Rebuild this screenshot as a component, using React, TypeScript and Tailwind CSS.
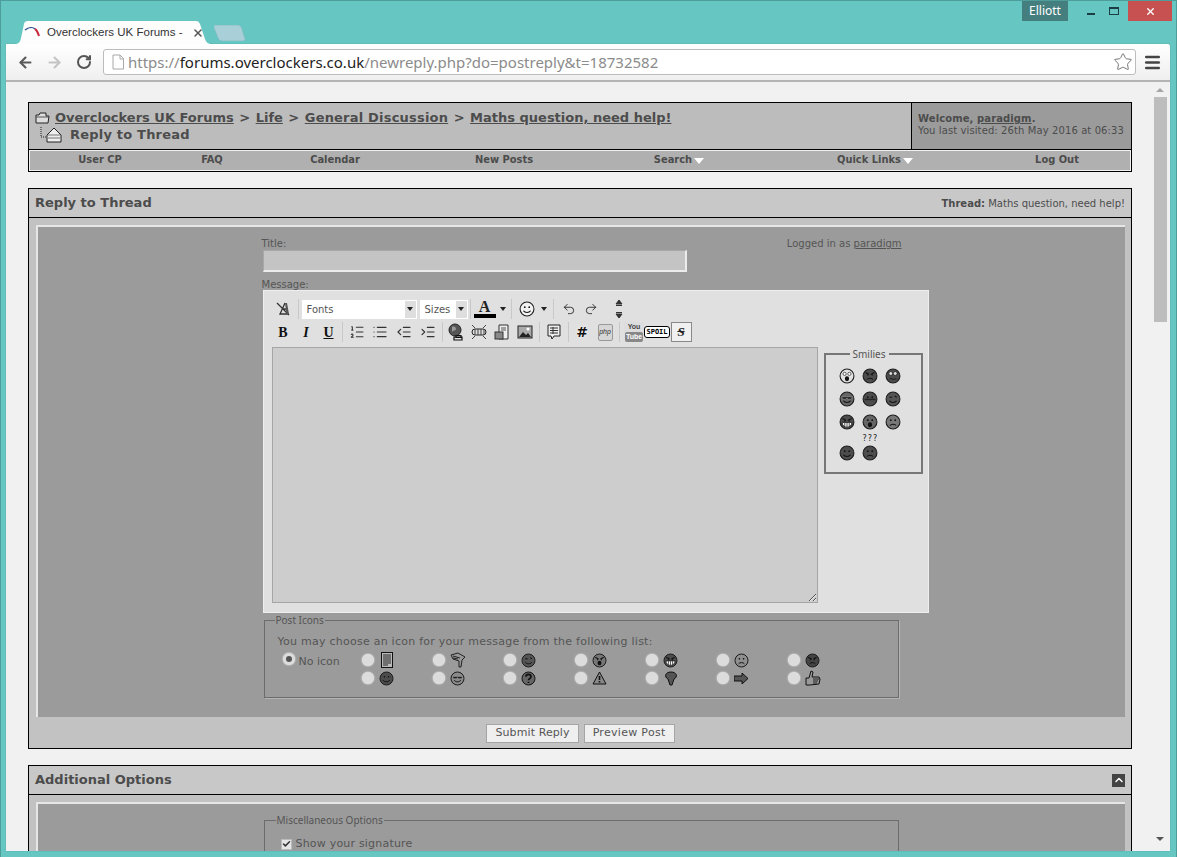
import React from "react"
import { ArrowLeft, ArrowRight, Check, ChevronUp, IndentDecrease, IndentIncrease, List, ListOrdered, Menu, RotateCw, Star, Undo2, Redo2, X } from "lucide-react"

type FaceProps = {
  size?: number
  fill?: string
  mouth?: "smile" | "flat" | "frown" | "open" | "grin" | "wavy" | "none"
  eyes?: "dots" | "angry" | "roll" | "shades" | "wide" | "wink"
}

function Face({ size = 18, fill = "#4c4c4c", mouth = "smile", eyes = "dots" }: FaceProps) {
  return (
    <svg width={size} height={size} viewBox="0 0 18 18" className="block shrink-0">
      <circle cx="9" cy="9" r="7.8" fill={fill} stroke="#1c1c1c" strokeWidth="1.2" />
      {eyes === "dots" && (
        <>
          <circle cx="6.5" cy="7" r="1" fill="#111" />
          <circle cx="11.5" cy="7" r="1" fill="#111" />
        </>
      )}
      {eyes === "angry" && <path d="M4 5l4 2.4M14 5l-4 2.4M6 8h1M11 8h1" stroke="#111" strokeWidth="1.3" fill="none" />}
      {eyes === "roll" && (
        <>
          <circle cx="6.5" cy="6.2" r="2.2" fill="#ddd" stroke="#111" strokeWidth=".8" />
          <circle cx="11.5" cy="6.2" r="2.2" fill="#ddd" stroke="#111" strokeWidth=".8" />
        </>
      )}
      {eyes === "shades" && <path d="M3 6.5h12l-1 2.7H10.4L9 7.8 7.6 9.2H4z" fill="#1b1b1b" stroke="#aaa" strokeWidth=".6" />}
      {eyes === "wide" && (
        <>
          <circle cx="6.3" cy="6.6" r="1.8" fill="#fff" stroke="#111" strokeWidth=".7" />
          <circle cx="11.7" cy="6.6" r="1.8" fill="#fff" stroke="#111" strokeWidth=".7" />
        </>
      )}
      {eyes === "wink" && <path d="M5 7h3M11 5.6l2.2 1.4" stroke="#111" strokeWidth="1.2" fill="none" />}
      {mouth === "smile" && <path d="M5 11c1.6 2.6 6.4 2.6 8 0" stroke="#111" strokeWidth="1.2" fill="none" />}
      {mouth === "flat" && <path d="M3 9.5h12" stroke="#222" strokeWidth="1.6" />}
      {mouth === "frown" && <path d="M5.5 13c1.4-2 5.6-2 7 0" stroke="#111" strokeWidth="1.2" fill="none" />}
      {mouth === "open" && <ellipse cx="9" cy="12" rx="2.4" ry="2.8" fill="#111" />}
      {mouth === "grin" && <path d="M3.6 9.5h10.8c0 3.5-2.6 5.3-5.4 5.3S3.6 13 3.6 9.5zM6.5 9.7v4.6M9 9.7v5M11.5 9.7v4.6" fill="#fff" stroke="#111" strokeWidth=".8" />}
      {mouth === "wavy" && <path d="M5 12.5c1-1.4 2-.4 3 0s2 .4 3 0 1.4-.5 2-.2" stroke="#111" strokeWidth="1" fill="none" />}
    </svg>
  )
}

function Doc({ children }: { children?: React.ReactNode }) {
  return (
    <svg width="18" height="18" viewBox="0 0 18 18" className="block">
      {children}
    </svg>
  )
}

function Slot({ w = "w-[23px]", children }: { w?: string; children: React.ReactNode }) {
  return <div className={`${w} h-5 flex items-center justify-center shrink-0`}>{children}</div>
}

function Sep({ className = "w-[5px]" }: { className?: string }) {
  return (
    <div className={`${className} h-5 flex justify-center shrink-0`}>
      <div className="w-px h-full bg-[#c8c8c8]" />
    </div>
  )
}

function Caret() {
  return <div className="w-0 h-0 border-x-[3px] border-x-transparent border-t-[4px] border-t-[#222]" />
}

function SelectBox({ label, w }: { label: string; w: string }) {
  return (
    <div className={`${w} h-[19px] bg-white flex items-center justify-between text-[10px] text-[#555] shrink-0`}>
      <span className="pl-[5px]">{label}</span>
      <span className="w-[11px] h-[17px] bg-[#dedede] flex items-center justify-center mr-px">
        <Caret />
      </span>
    </div>
  )
}

function Radio({ checked }: { checked?: boolean }) {
  return (
    <div className="w-3 h-3 rounded-full bg-[#dcdcdc] shadow-[0_0_2px_#ffffff] flex items-center justify-center shrink-0">
      {checked && <div className="w-[6px] h-[6px] rounded-full bg-[#555]" />}
    </div>
  )
}

function Smilies() {
  return (
    <fieldset className="w-[92px] h-[126px] border-2 border-[#777] shrink-0 px-[13px] mt-[1px]">
      <legend className="ml-[11px] px-[3px] text-[10px] leading-[12px] text-[#555] font-['Noto_Sans',sans-serif]">Smilies</legend>
      <div className="grid grid-cols-[repeat(3,23px)] auto-rows-[23px] pt-[4px] items-center">
        <Face size={16} fill="#e2e2e2" mouth="open" eyes="wide" />
        <Face size={16} mouth="frown" eyes="angry" />
        <Face size={16} mouth="wavy" eyes="roll" />
        <Face size={16} fill="#666" mouth="smile" eyes="shades" />
        <Face size={16} mouth="flat" eyes="dots" />
        <Face size={16} fill="#555" mouth="smile" eyes="wink" />
        <Face size={16} mouth="grin" eyes="angry" />
        <Face size={16} fill="#666" mouth="open" eyes="dots" />
        <Face size={16} fill="#777" mouth="frown" eyes="dots" />
      </div>
      <div className="flex gap-[7px] mt-[12px]">
        <Face size={16} />
        <div className="relative">
          <span className="absolute left-[1px] top-[-11px] text-[8px] leading-[10px] tracking-[1px] text-[#222]">???</span>
          <Face size={16} mouth="frown" />
        </div>
      </div>
    </fieldset>
  )
}

function Toolbar() {
  return (
    <div className="font-['DejaVu_Sans',sans-serif]">
      <div className="flex items-center h-5 mt-[8px]">
        <Slot>
          <Doc>
            <path d="M3 3l12 12M11 3l-5 11h9M9 9h5" stroke="#333" strokeWidth="1.3" fill="none" />
            <path d="M11 3l1.5 11h2.5L13 3z" fill="#555" />
          </Doc>
        </Slot>
        <Sep className="w-[7px]" />
        <SelectBox label="Fonts" w="w-[115px]" />
        <div className="w-[3px]" />
        <SelectBox label="Sizes" w="w-[48px]" />
        <Sep className="w-[5px]" />
        <div className="w-[22px] h-5 flex flex-col items-center shrink-0 ml-[1px]">
          <span className="font-['Liberation_Serif',serif] font-bold text-[16px] leading-[15px] text-[#222]">A</span>
          <div className="w-[22px] h-[4px] bg-black" />
        </div>
        <div className="w-[14px] flex justify-center"><Caret /></div>
        <Sep className="w-[4px]" />
        <div className="w-[24px] flex justify-center ml-[1px]"><Face size={16} fill="#f2f2f2" /></div>
        <div className="w-[10px] flex justify-center"><Caret /></div>
        <Sep className="w-[9px]" />
        <Slot w="w-[22px]"><Undo2 size={14} strokeWidth={1.5} className="text-[#222]" /></Slot>
        <Slot w="w-[22px]"><Redo2 size={14} strokeWidth={1.5} className="text-[#222]" /></Slot>
        <div className="w-[6px]" />
        <Slot w="w-[22px]">
          <svg width="8" height="20" viewBox="0 0 8 20">
            <path d="M4 1l3 4H1zM1 6.5h6M1 13.5h6M4 19l3-4H1z" fill="#333" stroke="#333" />
          </svg>
        </Slot>
      </div>
      <div className="flex items-center h-5 mt-[3px]">
        <Slot><span className="font-['Liberation_Serif',serif] font-bold text-[14px] text-[#111]">B</span></Slot>
        <Slot><span className="font-['Liberation_Serif',serif] font-bold italic text-[14px] text-[#111]">I</span></Slot>
        <Slot w="w-[22px]"><span className="font-['Liberation_Serif',serif] font-bold underline text-[14px] text-[#111]">U</span></Slot>
        <Sep className="w-[6px]" />
        <Slot><ListOrdered size={16} strokeWidth={1.6} className="text-[#333]" /></Slot>
        <Slot><List size={16} strokeWidth={1.8} className="text-[#333]" /></Slot>
        <Slot w="w-[24px]"><IndentDecrease size={16} strokeWidth={1.8} className="text-[#333]" /></Slot>
        <Slot w="w-[24px]"><IndentIncrease size={16} strokeWidth={1.8} className="text-[#333]" /></Slot>
        <Sep className="w-[5px]" />
        <Slot>
          <Doc>
            <circle cx="8" cy="7" r="6" fill="#555" stroke="#222" />
            <path d="M5 4c2-1 4 0 4 2s-3 1-4 3" fill="#999" />
            <path d="M7 14h8v3H7zM9 12.500h5v2H9z" fill="none" stroke="#111" strokeWidth="1.2" />
          </Doc>
        </Slot>
        <Slot>
          <Doc>
            <rect x="2" y="6" width="14" height="6" rx="3" fill="#ddd" stroke="#222" />
            <path d="M5 6v6M8 6v6M11 6v6M14 6v6M2 2l3 3M16 2l-3 3M2 16l3-3M16 16l-3-3" stroke="#444" />
          </Doc>
        </Slot>
        <Slot>
          <Doc>
            <path d="M6 2h9v14H6z" fill="#eee" stroke="#333" />
            <path d="M8 5h5M8 7h5" stroke="#555" />
            <rect x="2" y="9" width="8" height="7" fill="#888" stroke="#333" />
          </Doc>
        </Slot>
        <Slot>
          <Doc>
            <rect x="2" y="3" width="14" height="12" fill="#aaa" stroke="#222" />
            <path d="M3 14l4-5 3 3 2-2 3 4z" fill="#222" />
            <circle cx="12" cy="6" r="1.500" fill="#fff" />
          </Doc>
        </Slot>
        <Sep className="w-[6px]" />
        <Slot>
          <Doc>
            <path d="M3 2h12v11H9l-2 3-1-3H3z" fill="#eee" stroke="#222" />
            <path d="M5 5h8M5 7.500h8M5 10h8M8 4v7" stroke="#333" />
          </Doc>
        </Slot>
        <Sep className="w-[5px]" />
        <Slot><span className="font-bold text-[14px] text-[#111] [text-shadow:0_0_3px_#fff]">#</span></Slot>
        <Slot>
          <div className="w-[15px] h-[17px] bg-[#d6d6d6] border border-[#999] rounded-[2px] flex items-center justify-center font-['Liberation_Sans',sans-serif] italic text-[7px] leading-[8px] text-[#333]">php</div>
        </Slot>
        <Sep className="w-[6px]" />
        <Slot>
          <div className="w-5 h-5 bg-[#ddd] flex flex-col items-center font-['Liberation_Sans',sans-serif] font-bold text-[7px] leading-[9px]">
            <span className="text-[#444]">You</span>
            <span className="bg-[#888] text-white rounded-[2px] px-[1px] mt-[1px] leading-[10px]">Tube</span>
          </div>
        </Slot>
        <Slot>
          <span className="bg-white border border-black rounded-[3px] text-[7px] leading-[10px] px-px font-bold text-black font-['DejaVu_Sans_Mono',monospace]">SPOIL</span>
        </Slot>
        <div className="w-[2px]" />
        <div className="w-[21px] h-[20px] border border-[#888] bg-[#f0f0f0] flex items-center justify-center font-['Liberation_Serif',serif] font-bold italic text-[13px] text-[#222] line-through">S</div>
      </div>
    </div>
  )
}

function PostIcon({ icon }: { icon: React.ReactNode }) {
  return (
    <div className="flex items-center h-[18px] w-[71px]">
      <Radio />
      <div className="ml-[5px] flex justify-center w-4">{icon}</div>
    </div>
  )
}

const postIcons: React.ReactNode[] = [
  <svg width="12" height="16" viewBox="0 0 12 16"><rect x=".5" y=".5" width="11" height="15" fill="#bbb" stroke="#111" /><path d="M2 3h8M2 5h8M2 7h8M2 9h8M2 11h8M2 13h5" stroke="#222" /></svg>,
  <svg width="16" height="16" viewBox="0 0 16 16"><path d="M1 3l7-2 7 4-3 3-1 7H9V9L3 7z" fill="#999" stroke="#222" /><path d="M3 4l7 2M3 6l5 1" stroke="#222" /></svg>,
  <Face size={15} fill="#555" mouth="smile" eyes="wink" />,
  <Face size={15} fill="#777" mouth="open" eyes="angry" />,
  <Face size={15} mouth="grin" eyes="angry" />,
  <Face size={15} fill="#8f8f8f" mouth="frown" eyes="dots" />,
  <Face size={15} fill="#444" mouth="frown" eyes="angry" />,
  <Face size={15} />,
  <Face size={15} fill="#8a8a8a" mouth="smile" eyes="shades" />,
  <svg width="15" height="15" viewBox="0 0 18 18"><circle cx="9" cy="9" r="7.800" fill="#666" stroke="#111" strokeWidth="1.200" /><path d="M6 7c0-4 6-4 6 0 0 2-3 2-3 4M9 13v1.500" stroke="#111" strokeWidth="2" fill="none" /></svg>,
  <svg width="15" height="14" viewBox="0 0 15 14"><path d="M7.500 1L14 13H1z" fill="#888" stroke="#111" /><path d="M7.500 5v4M7.500 10v1.500" stroke="#111" strokeWidth="1.600" /></svg>,
  <svg width="12" height="15" viewBox="0 0 12 15"><path d="M6 1c6 0 7 5 3 7l-2 6H5L3 8C-1 6 0 1 6 1z" fill="#555" stroke="#111" /></svg>,
  <svg width="15" height="11" viewBox="0 0 15 11"><path d="M0 3h8V0l6 5.500L8 11V8H0z" fill="#555" stroke="#111" /></svg>,
  <svg width="16" height="16" viewBox="0 0 16 16"><path d="M1 8h3l2-7 2 1-1 5h7l1 2-1 5-9 1H1z" fill="#999" stroke="#111" /><path d="M8 9h6M8 11h5M8 13h4" stroke="#222" /></svg>,
]

function PanelHeader({ children }: { children: React.ReactNode }) {
  return (
    <div className="h-[29px] bg-[#c8c8c8] border-b border-black flex items-center justify-between pl-[6px] pr-[6px]">
      {children}
    </div>
  )
}

function Inner({ children, className = "" }: { children: React.ReactNode; className?: string }) {
  return (
    <div className={`bg-[#9b9b9b] border-t-2 border-l-2 border-[#e6e6e6] flex justify-center ${className}`}>
      {children}
    </div>
  )
}

export default function App() {
  return (
    <div className="w-[1177px] h-[857px] bg-[#65c6c2] overflow-hidden flex flex-col font-['DejaVu_Sans',sans-serif] border-t border-x border-t-[#4d9e9b] border-x-[#4d9e9b]">
      <div className="h-[43px] flex justify-between pl-[13px] pr-[4px] shrink-0">
        <div className="flex items-end">
          <div className="relative w-[198px] h-[23px] flex items-center pl-[4px] pr-[8px] text-[11.500px] text-[#333] font-['Liberation_Sans',sans-serif]">
            <svg className="absolute inset-0" width="198" height="23" viewBox="0 0 198 23">
              <path d="M0 23c5 0 6-2 7-6l3-14c.4-2 1.500-3 4-3h168c2 0 3 1 4 3l5 15c1 3 3 5 7 5z" fill="#fdfdfd" />
            </svg>
            <svg className="relative mx-[6px] shrink-0" width="16" height="16" viewBox="0 0 16 16">
              <path d="M1 5c4-3 8-3 10-1" stroke="#274b8a" strokeWidth="1.400" fill="none" />
              <path d="M11 4c2 1 3 4 4 7" stroke="#c8283c" strokeWidth="2" fill="none" />
            </svg>
            <span className="relative w-[133px] shrink-0 whitespace-nowrap ml-[1px]">Overclockers UK Forums -</span>
            <X size={12} strokeWidth={3} className="relative text-[#555] ml-[12px] shrink-0" />
          </div>
          <svg className="mb-[3px] ml-[2px]" width="32" height="16" viewBox="0 0 32 16">
            <path d="M0 0h24c2 0 3 1 4 4l3 10c.3 1 0 2-2 2H8c-2 0-3-1-4-3L0 3c-.3-1-.3-3 0-3z" fill="#a9cfd8" stroke="#7fb5be" strokeWidth=".6" />
          </svg>
        </div>
        <div className="flex h-5">
          <div className="w-[46px] bg-[#457e7f] text-white text-[12px] flex items-center justify-center font-['Noto_Sans',sans-serif]">Elliott</div>
          <div className="w-[60px] flex items-center justify-around pl-[12px] pr-[2px]">
            <div className="w-2 h-[2px] bg-[#1d3d44] mt-[5px]" />
            <div className="w-[10px] h-[8px] border border-t-2 border-[#1d3d44]" />
          </div>
          <div className="w-[44px] bg-[#c75050] flex items-center justify-center">
            <X size={11} strokeWidth={3} className="text-white" />
          </div>
        </div>
      </div>

      <div className="flex-1 min-h-0 ml-[5px] mr-[6px] mb-[6px] bg-[#f1f1f1] flex flex-col overflow-hidden rounded-tr-[3px] shadow-[0_0_1px_#44807e]">
        <div className="h-[38px] shrink-0 bg-gradient-to-b from-white to-[#efefef] border-b-2 border-[#b4b4b4] flex items-center pl-[8px] pr-[8px]">
          <ArrowLeft size={17} strokeWidth={3} className="text-[#5a5a5a] ml-[3px]" />
          <ArrowRight size={17} strokeWidth={3} className="text-[#c4c4c4] ml-[12px]" />
          <RotateCw size={16} strokeWidth={3} className="text-[#555] ml-[13px]" />
          <div className="ml-[11px] w-[1033px] h-[26px] bg-white border border-[#bcbcbc] rounded-[3px] flex items-center pl-[7px] pr-[2px] text-[15px] font-['Noto_Sans',sans-serif] text-[#8b8b8b]">
            <svg width="14" height="16" viewBox="0 0 14 16" className="shrink-0">
              <path d="M2 1h7l3.500 3.500V15H2zM9 1v4h3.500" fill="#fff" stroke="#a8a8a8" />
            </svg>
            <span className="ml-[3px] whitespace-nowrap">https://<span className="text-[#222]">forums.overclockers.co.uk</span>/newreply.php?do=postreply&amp;t=18732582</span>
            <Star size={20} strokeWidth={1.200} className="ml-auto text-[#777]" />
          </div>
          <Menu size={19} strokeWidth={3} className="text-[#444] ml-[7px]" />
        </div>

        <div className="flex-1 min-h-0 flex">
          <div className="w-[1147px] shrink-0 pl-[22px] pr-[21px] pt-[20px] text-[#4c4c4c] overflow-hidden">
            <div className="border border-black">
              <div className="flex h-[47px] border-b border-black">
                <div className="flex-1 bg-[#bcbcbc] pl-[6px] pt-[6px] font-bold text-[#4c4c4c]">
                  <div className="flex items-center h-[17px] text-[13px] whitespace-nowrap">
                    <svg width="15" height="14" viewBox="0 0 15 14" className="mr-[5px]"><path d="M1 4h3l1-2h6v3h3l-1 7H1z" fill="#ddd" stroke="#222" /><path d="M1 6h12" stroke="#555" /></svg>
                    <span className="underline">Overclockers UK Forums</span>
                    <span className="mx-[5.500px]">&gt;</span>
                    <span className="underline">Life</span>
                    <span className="mx-[5.500px]">&gt;</span>
                    <span className="underline tracking-[0.2px]">General Discussion</span>
                    <span className="mx-[5.500px]">&gt;</span>
                    <span className="underline">Maths question, need help!</span>
                  </div>
                  <div className="flex items-center h-[17px] text-[13px] pl-[5px] whitespace-nowrap tracking-[0.2px]">
                    <svg width="26" height="16" viewBox="4 0 26 16" className="mr-[4px] shrink-0">
                      <path d="M5 0v10h6" stroke="#222" strokeDasharray="1 1" fill="none" />
                      <path d="M11 8l7-7 7 7v7H11z" fill="#eee" stroke="#222" />
                      <path d="M12 8h12M12 11h12" stroke="#777" />
                    </svg>
                    Reply to Thread
                  </div>
                </div>
                <div className="w-[220px] bg-[#9b9b9b] border-l border-black pl-[6px] pt-[10px] text-[10px] leading-[12px] whitespace-nowrap tracking-[0.1px]">
                  <div><b>Welcome, <span className="underline">paradigm</span>.</b></div>
                  <div>You last visited: 26th May 2016 at 06:33</div>
                </div>
              </div>
              <div className="h-[21px] bg-[#b0b0b0] border border-[#f1f1f1] grid grid-cols-[140px_84px_162px_176px_174px_218px_1fr] items-center text-center text-[11px] font-bold font-['DejaVu_Sans_Condensed','DejaVu_Sans',sans-serif]">
                <span>User CP</span>
                <span>FAQ</span>
                <span>Calendar</span>
                <span>New Posts</span>
                <span className="flex items-center justify-center gap-[2px]">Search<span className="w-0 h-0 border-x-[5px] border-x-transparent border-t-[6px] border-t-white" /></span>
                <span className="flex items-center justify-center gap-[2px]">Quick Links<span className="w-0 h-0 border-x-[5px] border-x-transparent border-t-[6px] border-t-white" /></span>
                <span>Log Out</span>
              </div>
            </div>

            <div className="mt-[16px] border border-black bg-[#c2c2c2]">
              <PanelHeader>
                <span className="font-bold text-[13px]">Reply to Thread</span>
                <span className="text-[10px] whitespace-nowrap"><b>Thread:</b> Maths question, need help!</span>
              </PanelHeader>
              <div className="pt-[7px] pl-[7px] pr-[6px] pb-[5px]">
                <Inner className="h-[492px]">
                  <div className="w-[640px] shrink-0 pt-[11px] text-[10px] text-[#555]">
                    <div className="flex justify-between leading-[12px]">
                      <span>Title:</span>
                      <span>Logged in as <span className="underline">paradigm</span></span>
                    </div>
                    <div className="ml-px w-[424px] h-[22px] bg-[#c4c4c4] border border-[#a8a8a8] border-r-2 border-b-2 border-r-[#ececec] border-b-[#ececec]" />
                    <div className="mt-[8px] leading-[10px]">Message:</div>
                    <div className="ml-px w-[666px] h-[323px] bg-[#e0e0e0] border border-[#eeeeee] pl-[8px]">
                      <Toolbar />
                      <div className="flex gap-[6px] mt-[5px]">
                        <textarea readOnly className="w-[546px] h-[256px] bg-[#cdcdcd] border border-[#a6a6a6] outline-none shrink-0" />
                        <Smilies />
                      </div>
                    </div>
                    <fieldset className="ml-[2px] mt-[1px] w-[635px] h-[84px] border border-[#6c6c6c] shadow-[1px_1px_0_#b5b5b5] px-[13px]">
                      <legend className="ml-[-3px] px-[1px] leading-[12px] font-['Noto_Sans',sans-serif]">Post Icons</legend>
                      <div className="mt-[9px] text-[11px] leading-[14px] whitespace-nowrap tracking-[0.25px]">You may choose an icon for your message from the following list:</div>
                      <div className="flex mt-[2px]">
                        <div className="w-[84px] flex items-start pl-[5px] pt-[2px]">
                          <Radio checked />
                          <span className="ml-[4px] mt-[2px] text-[11px] leading-[14px]">No icon</span>
                        </div>
                        <div className="grid grid-cols-[repeat(7,71px)]">
                          {postIcons.map((icon, i) => (
                            <PostIcon key={i} icon={icon} />
                          ))}
                        </div>
                      </div>
                    </fieldset>
                  </div>
                </Inner>
                <div className="flex justify-center gap-[5px] pt-[7px] text-[11px] text-[#555] tracking-[0.1px] h-[26px]">
                  <div className="h-[19px] px-[8px] bg-[#efefef] border border-[#a5a5a5] flex items-center">Submit Reply</div>
                  <div className="h-[19px] px-[8px] bg-[#efefef] border border-[#a5a5a5] flex items-center tracking-[0.3px]">Preview Post</div>
                </div>
              </div>
            </div>

            <div className="mt-[16px] border border-black bg-[#c2c2c2] h-[120px]">
              <PanelHeader>
                <span className="font-bold text-[13px]">Additional Options</span>
                <div className="w-[13px] h-[13px] bg-[#444] flex items-center justify-center">
                  <ChevronUp size={12} strokeWidth={3} className="text-white" />
                </div>
              </PanelHeader>
              <div className="pt-[7px] pl-[7px] pr-[6px]">
                <Inner className="h-[100px]">
                  <div className="w-[640px] shrink-0 pl-[2px] pt-[10px] text-[10px] text-[#555]">
                    <fieldset className="w-[635px] h-[70px] border border-[#6c6c6c] px-[10px]">
                      <legend className="ml-[1px] px-[1px] leading-[12px] font-['Noto_Sans',sans-serif]">Miscellaneous Options</legend>
                      <div className="flex items-center gap-[4px] mt-[11px] pl-[6px] text-[11px] tracking-[0.2px] leading-[14px]">
                        <div className="w-[11px] h-[11px] bg-[#e6e6e6] border border-[#bbb] flex items-center justify-center">
                          <Check size={10} strokeWidth={4} className="text-[#333]" />
                        </div>
                        Show your signature
                      </div>
                    </fieldset>
                  </div>
                </Inner>
              </div>
            </div>
          </div>

          <div className="w-[17px] shrink-0 flex flex-col items-center pt-[6px] pr-[3px]">
            <div className="w-0 h-0 border-x-[4px] border-x-transparent border-b-[4px] border-b-[#a5a5a5]" />
            <div className="w-[13px] h-[225px] bg-[#bdbdbd] mt-[5px]" />
            <div className="w-0 h-0 border-x-[4px] border-x-transparent border-t-[4px] border-t-[#555] mt-[515px]" />
          </div>
        </div>
      </div>
    </div>
  )
}
